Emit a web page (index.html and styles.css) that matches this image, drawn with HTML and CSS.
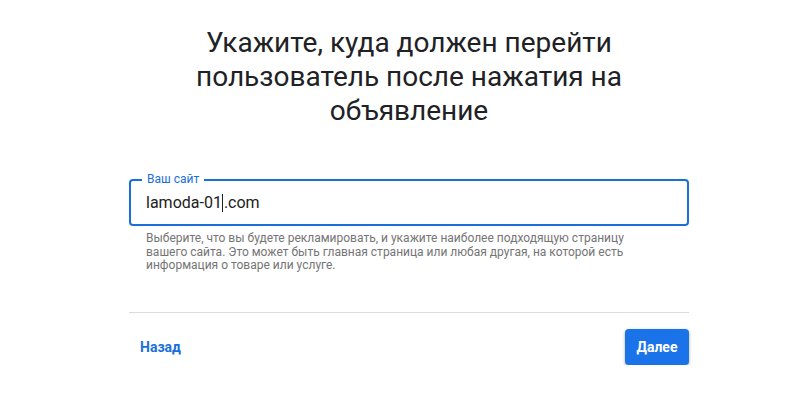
FILE: index.html
```html
<!DOCTYPE html>
<html lang="ru">
<head>
<meta charset="utf-8">
<link rel="stylesheet" href="styles.css">
</head>
<body>
<main class="page">
  <h1 class="title">Укажите, куда должен перейти<br>пользователь после нажатия на<br>объявление</h1>
  <div class="field">
    <span class="field-label">Ваш сайт</span>
    <div class="field-value">lamoda-01<span class="caret"></span>.com</div>
  </div>
  <p class="helper">Выберите, что вы будете рекламировать, и укажите наиболее подходящую страницу<br>вашего сайта. Это может быть главная страница или любая другая, на которой есть<br>информация о товаре или услуге.</p>
  <hr class="divider">
  <div class="actions">
    <button class="btn-text">Назад</button>
    <button class="btn-primary">Далее</button>
  </div>
</main>
</body>
</html>
```
FILE: styles.css
```css
html, body {
  margin: 0;
  padding: 0;
  background: #fff;
}
body {
  font-family: Roboto, "Liberation Sans", Arial, sans-serif;
  color: #202124;
}
.page {
  width: 560px;
  margin-left: 129px;
  padding-top: 26px;
}
.title {
  margin: 0;
  font-family: Roboto, "Open Sans", sans-serif;
  font-weight: 400;
  font-size: 28px;
  line-height: 34px;
  text-align: center;
  color: #202124;
}
.field {
  position: relative;
  margin-top: 51px;
  height: 43px;
  border: 2px solid #1a6fd8;
  border-radius: 4px;
  display: flex;
  align-items: center;
  padding: 0 15px;
}
.field-label {
  position: absolute;
  top: -9px;
  left: 11px;
  padding: 0 5px;
  background: #fff;
  font-size: 12px;
  line-height: 15px;
  color: #1a6fd8;
}
.field-value {
  font-size: 16px;
  color: #202124;
  display: flex;
  align-items: center;
}
.caret {
  display: inline-block;
  width: 1px;
  height: 18px;
  background: #202124;
  margin: 0 0.5px;
}
.helper {
  margin: 6px 0 0;
  padding-left: 17px;
  font-size: 12px;
  line-height: 13.5px;
  color: #757575;
}
.divider {
  margin: 39px 0 0;
  border: 0;
  border-top: 1px solid #dadce0;
}
.actions {
  display: flex;
  justify-content: space-between;
  align-items: center;
  padding-top: 16px;
}
.btn-text, .btn-primary {
  font-family: Roboto, "Liberation Sans", sans-serif;
  font-size: 14px;
  font-weight: 700;
  height: 36px;
  border-radius: 4px;
  border: 0;
  cursor: pointer;
}
.btn-text {
  background: transparent;
  color: #1a6fd8;
  padding: 0 11px;
}
.btn-primary {
  background: #1a73e8;
  color: #fff;
  width: 64px;
  padding: 0;
  box-shadow: 0 1px 2px rgba(60,64,67,.3), 0 1px 3px 1px rgba(60,64,67,.15);
}
```
